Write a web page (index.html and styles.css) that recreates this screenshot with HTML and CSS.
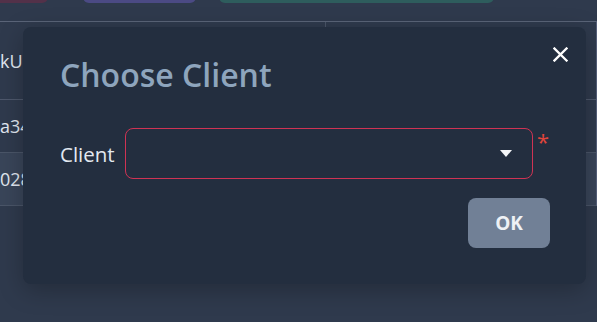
FILE: index.html
```html
<!DOCTYPE html>
<html lang="en">
<head>
<meta charset="utf-8">
<title>Choose Client</title>
<link rel="stylesheet" href="styles.css">
</head>
<body>
  <div class="toolbar">
    <span class="tb-btn tb-pink"></span>
    <span class="tb-btn tb-purple"></span>
    <span class="tb-btn tb-teal"></span>
  </div>
  <div class="table">
    <div class="row row-head">
      <div class="cell cell-first">kUuid</div>
      <div class="cell cell-second"></div>
    </div>
    <div class="row">
      <div class="cell cell-first">a34f9c</div>
      <div class="cell cell-second"></div>
    </div>
    <div class="row row-hl">
      <div class="cell cell-first">028b71</div>
      <div class="cell cell-second"></div>
    </div>
  </div>

  <div class="modal" role="dialog" aria-labelledby="mtitle">
    <button class="close" aria-label="Close">
      <svg width="15" height="15" viewBox="0 0 15 15"><path d="M1.5 1.5 L13.5 13.5 M13.5 1.5 L1.5 13.5" stroke="#ffffff" stroke-width="2.3" stroke-linecap="square" fill="none"/></svg>
    </button>
    <h2 class="title" id="mtitle">Choose Client</h2>
    <div class="form-row">
      <label class="label">Client</label>
      <div class="select"><span class="caret"></span></div>
      <span class="req">*</span>
    </div>
    <div class="footer">
      <button class="ok">OK</button>
    </div>
  </div>
</body>
</html>
```

FILE: styles.css
```css
html, body {
  margin: 0;
  padding: 0;
}
body {
  background: #2f3a4d;
  font-family: "Open Sans", "Noto Sans", sans-serif;
  width: 597px;
  height: 322px;
  overflow: hidden;
  position: relative;
}
.toolbar {
  height: 3px;
  overflow: hidden;
  display: flex;
  align-items: flex-end;
}
.tb-btn {
  display: block;
  height: 36px;
  border-radius: 6px;
  flex: none;
}
.tb-pink { width: 58px; margin-left: -10px; background: #533149; }
.tb-purple { width: 113px; margin-left: 35px; background: #4b4a84; }
.tb-teal { width: 275px; margin-left: 23px; background: #2e5d5d; }

.table {
  margin-top: 18px;
  border-top: 1px solid #5a6478;
  width: 596px;
  border-right: 1px solid #56607a;
}
.row {
  display: grid;
  grid-template-columns: 325px 1fr;
  height: 52px;
  border-bottom: 1px solid #4a5568;
  color: #e2e8f0;
  font-size: 18px;
}
.row-head {
  height: 77px;
  border-bottom: 1px solid #4e586c;
}
.row-hl {
  background: #394559;
}
.cell {
  display: flex;
  align-items: center;
  overflow: hidden;
  white-space: nowrap;
}
.cell-second {
  border-left: 1px solid #4a5568;
}

.modal {
  position: absolute;
  left: 23px;
  top: 27px;
  width: 563px;
  height: 257px;
  box-sizing: border-box;
  background: #232e3f;
  border-radius: 8px;
  padding: 28px 36px 36px 37px;
  box-shadow: 0 6px 24px rgba(0, 0, 0, 0.25);
  display: flex;
  flex-direction: column;
}
.close {
  position: absolute;
  top: 11px;
  right: 10px;
  width: 32px;
  height: 32px;
  padding: 0;
  border: 0;
  background: transparent;
  display: flex;
  align-items: center;
  justify-content: center;
}
.title {
  margin: 0;
  font-size: 32px;
  line-height: 40px;
  font-weight: 600;
  color: #8ea5bd;
}
.form-row {
  margin-top: 33px;
  display: flex;
  align-items: center;
  height: 51px;
}
.label {
  font-size: 20.5px;
  color: #e2e8f0;
  width: 65px;
  flex: none;
}
.select {
  flex: 1;
  height: 51px;
  box-sizing: border-box;
  border: 1px solid #cf3354;
  border-radius: 8px;
  display: flex;
  align-items: center;
  justify-content: flex-end;
  padding-right: 20px;
}
.caret {
  width: 0;
  height: 0;
  border-left: 6px solid transparent;
  border-right: 6px solid transparent;
  border-top: 7px solid #f4f6f8;
}
.req {
  align-self: flex-start;
  margin-left: 4px;
  color: #e0453b;
  font-size: 22px;
  line-height: 22px;
  margin-top: 2px;
  width: 13px;
}
.footer {
  margin-top: 19px;
  display: flex;
  justify-content: flex-end;
}
.ok {
  width: 82px;
  height: 50px;
  border: 0;
  border-radius: 8px;
  background: #718096;
  color: #eef1f5;
  font-family: "Open Sans", "Noto Sans", sans-serif;
  font-weight: 700;
  font-size: 19px;
  padding: 0;
}
```
